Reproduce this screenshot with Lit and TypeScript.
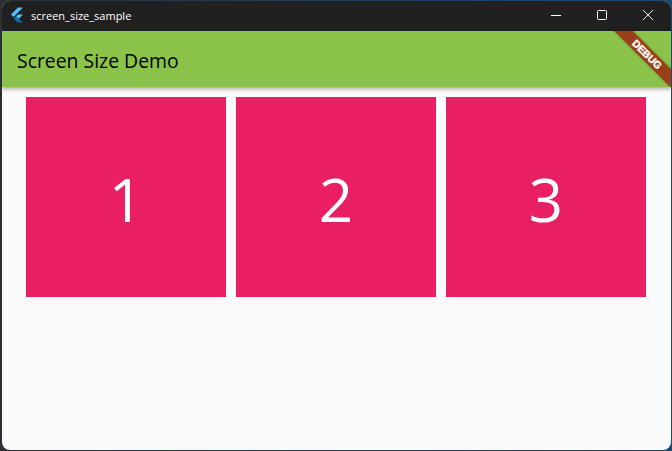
import { LitElement, html, css } from "lit";
import { customElement } from "lit/decorators.js";

@customElement("app-root")
export class AppRoot extends LitElement {
  static styles = css`
    :host {
      display: block;
      width: 672px;
      height: 451px;
      overflow: hidden;
      font-family: "Open Sans", "Noto Sans", sans-serif;
      background: linear-gradient(90deg, #2b2f33 0%, #1d3f5f 45%, #174a75 100%);
    }
    .window {
      box-sizing: border-box;
      height: 449px;
      margin: 1px 1px 0 2px;
      border-radius: 8px;
      overflow: hidden;
      background: #fafafa;
      display: flex;
      flex-direction: column;
    }
    .titlebar {
      box-sizing: border-box;
      height: 30px;
      padding-bottom: 2px;
      flex: none;
      background: #202020;
      display: flex;
      align-items: center;
      color: #fff;
    }
    .logo {
      width: 14px;
      height: 16px;
      margin-left: 8px;
      flex: none;
    }
    .name {
      margin-left: 7px;
      font-size: 11px;
      flex: 1;
    }
    .ctl {
      width: 46px;
      height: 28px;
      flex: none;
      display: flex;
      align-items: center;
      justify-content: center;
    }
    .appbar {
      position: relative;
      height: 56px;
      flex: none;
      overflow: hidden;
      background: #8bc34a;
      display: flex;
      align-items: center;
      padding: 2px 0 0 15px;
      box-sizing: border-box;
      box-shadow: 0 2px 4px rgba(0, 0, 0, 0.35);
      z-index: 1;
      font-size: 19.4px;
      font-weight: 500;
      color: #000;
    }
    .banner {
      position: absolute;
      left: 594.5px;
      top: 17px;
      width: 100px;
      height: 13px;
      transform: rotate(45deg);
      background: rgba(160, 0, 0, 0.68);
      box-shadow: 0 0 3px rgba(0, 0, 0, 0.3);
      color: #fff;
      font: 900 10.2px/13px "Liberation Sans", sans-serif;
      text-align: center;
      -webkit-text-stroke: 0.4px #fff;
    }
    .grid {
      display: flex;
      gap: 10px;
      padding: 10px 0 0 24px;
    }
    .box {
      box-sizing: border-box;
      width: 200px;
      height: 200px;
      padding-top: 4px;
      background: #e91e63;
      color: #fff;
      font-size: 60px;
      display: flex;
      align-items: center;
      justify-content: center;
    }
  `;

  render() {
    return html`
      <div class="window">
        <div class="titlebar">
          <svg class="logo" viewBox="0 0 14 16">
            <path d="M8 0.5h5L3.5 10 1 7.5z" fill="#4fc3f7"></path>
            <path d="M8 7.5h5L8.5 12 6 9.5z" fill="#4fc3f7"></path>
            <path d="M6 9.5l2.5 2.5L13 15.5H8L3.8 11.7z" fill="#0d6fb8"></path>
          </svg>
          <span class="name">screen_size_sample</span>
          <div class="ctl">
            <svg width="10" height="10" viewBox="0 0 10 10"><path d="M0 5.5h10" stroke="#fff" fill="none"></path></svg>
          </div>
          <div class="ctl">
            <svg width="10" height="10" viewBox="0 0 10 10"><rect x="0.5" y="0.5" width="9" height="9" rx="1" stroke="#fff" fill="none"></rect></svg>
          </div>
          <div class="ctl">
            <svg width="10" height="10" viewBox="0 0 10 10"><path d="M0 0l10 10M10 0L0 10" stroke="#fff" stroke-width="0.9" fill="none"></path></svg>
          </div>
        </div>
        <div class="appbar">
          Screen Size Demo
          <div class="banner">DEBUG</div>
        </div>
        <div class="grid">
          <div class="box">1</div>
          <div class="box">2</div>
          <div class="box">3</div>
        </div>
      </div>
    `;
  }
}
